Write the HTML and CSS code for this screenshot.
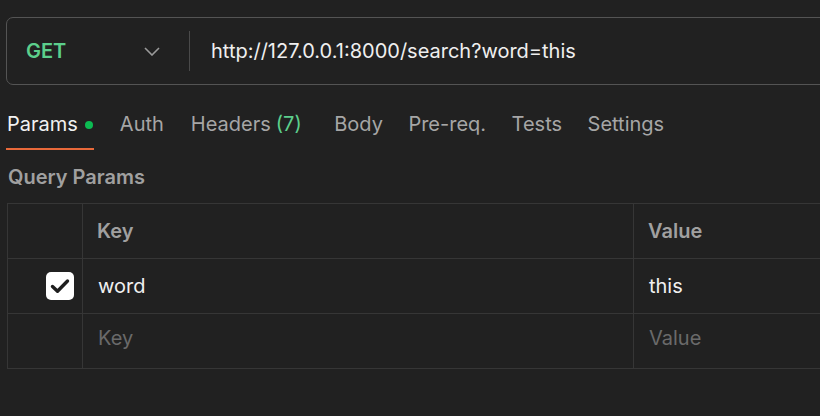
FILE: index.html
```html
<!DOCTYPE html>
<html>
<head>
<meta charset="utf-8">
<link rel="stylesheet" href="styles.css">
</head>
<body>
<div class="page">
  <div class="urlbar">
    <div class="method">
      <span class="method-name">GET</span>
      <svg class="chev" width="16" height="9" viewBox="0 0 16 9"><path d="M1 1 L8 8 L15 1" fill="none" stroke="#9a9a9a" stroke-width="1.6"/></svg>
    </div>
    <div class="divider"></div>
    <div class="url">http://127.0.0.1:8000/search?word=this</div>
  </div>
  <div class="tabs">
    <div class="tab active wide">Params <span class="dot"></span></div>
    <div class="tab wide">Auth</div>
    <div class="tab">Headers <span class="count">(7)</span></div>
    <div class="tab">Body</div>
    <div class="tab">Pre-req.</div>
    <div class="tab">Tests</div>
    <div class="tab">Settings</div>
  </div>
  <div class="section-title">Query Params</div>
  <div class="table">
    <div class="row head">
      <div class="cell c0"></div>
      <div class="cell c1">Key</div>
      <div class="cell c2">Value</div>
    </div>
    <div class="row">
      <div class="cell c0"><span class="check"><svg width="20" height="16" viewBox="0 0 20 16"><path d="M2.5 8.5 L7.5 13.2 L17.5 3" fill="none" stroke="#1e1e1e" stroke-width="3.4" stroke-linecap="round" stroke-linejoin="round"/></svg></span></div>
      <div class="cell c1 val">word</div>
      <div class="cell c2 val">this</div>
    </div>
    <div class="row">
      <div class="cell c0"></div>
      <div class="cell c1 ph">Key</div>
      <div class="cell c2 ph">Value</div>
    </div>
  </div>
</div>
</body>
</html>
```
FILE: styles.css
```css
html, body {
  margin: 0;
  padding: 0;
  background: #212121;
  overflow: hidden;
}
body {
  font-family: Inter, "Noto Sans", sans-serif;
  color: #e6e6e6;
  width: 820px;
  height: 416px;
}
.page {
  padding: 17px 0 0 6px;
  width: 820px;
  height: 416px;
  box-sizing: border-box;
  overflow: hidden;
}
.urlbar {
  display: flex;
  align-items: center;
  height: 66px;
  width: 860px;
  border: 1px solid #545454;
  border-radius: 7px;
  box-sizing: content-box;
}
.method {
  display: flex;
  align-items: center;
  width: 163px;
  padding-left: 19px;
  box-sizing: border-box;
}
.method-name {
  color: #5ccf8c;
  font-weight: 600;
  font-size: 20px;
  flex: 1;
}
.chev {
  margin-right: 10px;
}
.divider {
  width: 1px;
  height: 40px;
  background: #4a4a4a;
  margin-left: 19px;
}
.url {
  margin-left: 21px;
  font-size: 20px;
  color: #efefef;
}
.tabs {
  display: flex;
  margin-top: 21px;
  height: 44px;
}
.tab {
  font-size: 20px;
  color: #a6a6a6;
  padding: 6px 1px 0 1px;
  margin-right: 23.5px;
  box-sizing: border-box;
  display: flex;
  align-items: flex-start;
  white-space: nowrap;
}
.tab.wide {
  margin-right: 25px;
}
.tab.active {
  color: #f2f2f2;
  border-bottom: 2px solid #e8693a;
}
.dot {
  width: 8px;
  height: 8px;
  border-radius: 50%;
  background: #0cbb52;
  margin: 9px 0 0 7px;
}
.count {
  color: #5ccf8c;
  margin-left: 5px;
  margin-right: 7px;
}
.section-title {
  font-size: 20px;
  font-weight: 600;
  color: #a0a0a0;
  padding: 15px 0 0 2px;
  height: 53px;
  box-sizing: border-box;
}
.table {
  margin-left: 1px;
  border-top: 1px solid #363636;
  border-left: 1px solid #363636;
  border-bottom: 1px solid #363636;
  width: 830px;
}
.row {
  display: flex;
  height: 54px;
  border-bottom: 1px solid #363636;
}
.row:last-child {
  border-bottom: none;
}
.cell {
  display: flex;
  align-items: center;
  font-size: 20px;
  padding-bottom: 1px;
  box-sizing: border-box;
}
.c0 {
  width: 75px;
  border-right: 1px solid #363636;
  justify-content: flex-end;
  padding-right: 8px;
}
.c1 {
  width: 551px;
  border-right: 1px solid #363636;
  padding-left: 14px;
}
.c2 {
  flex: 1;
  padding-left: 14px;
}
.head .cell {
  font-weight: 600;
  color: #a0a0a0;
}
.val {
  color: #f0f0f0;
  padding-left: 15px;
}
.ph {
  color: #6a6a6a;
  padding-left: 15px;
  padding-bottom: 7px;
}
.check {
  width: 28px;
  height: 28px;
  border-radius: 5px;
  background: #ffffff;
  display: flex;
  align-items: center;
  justify-content: center;
}
```
